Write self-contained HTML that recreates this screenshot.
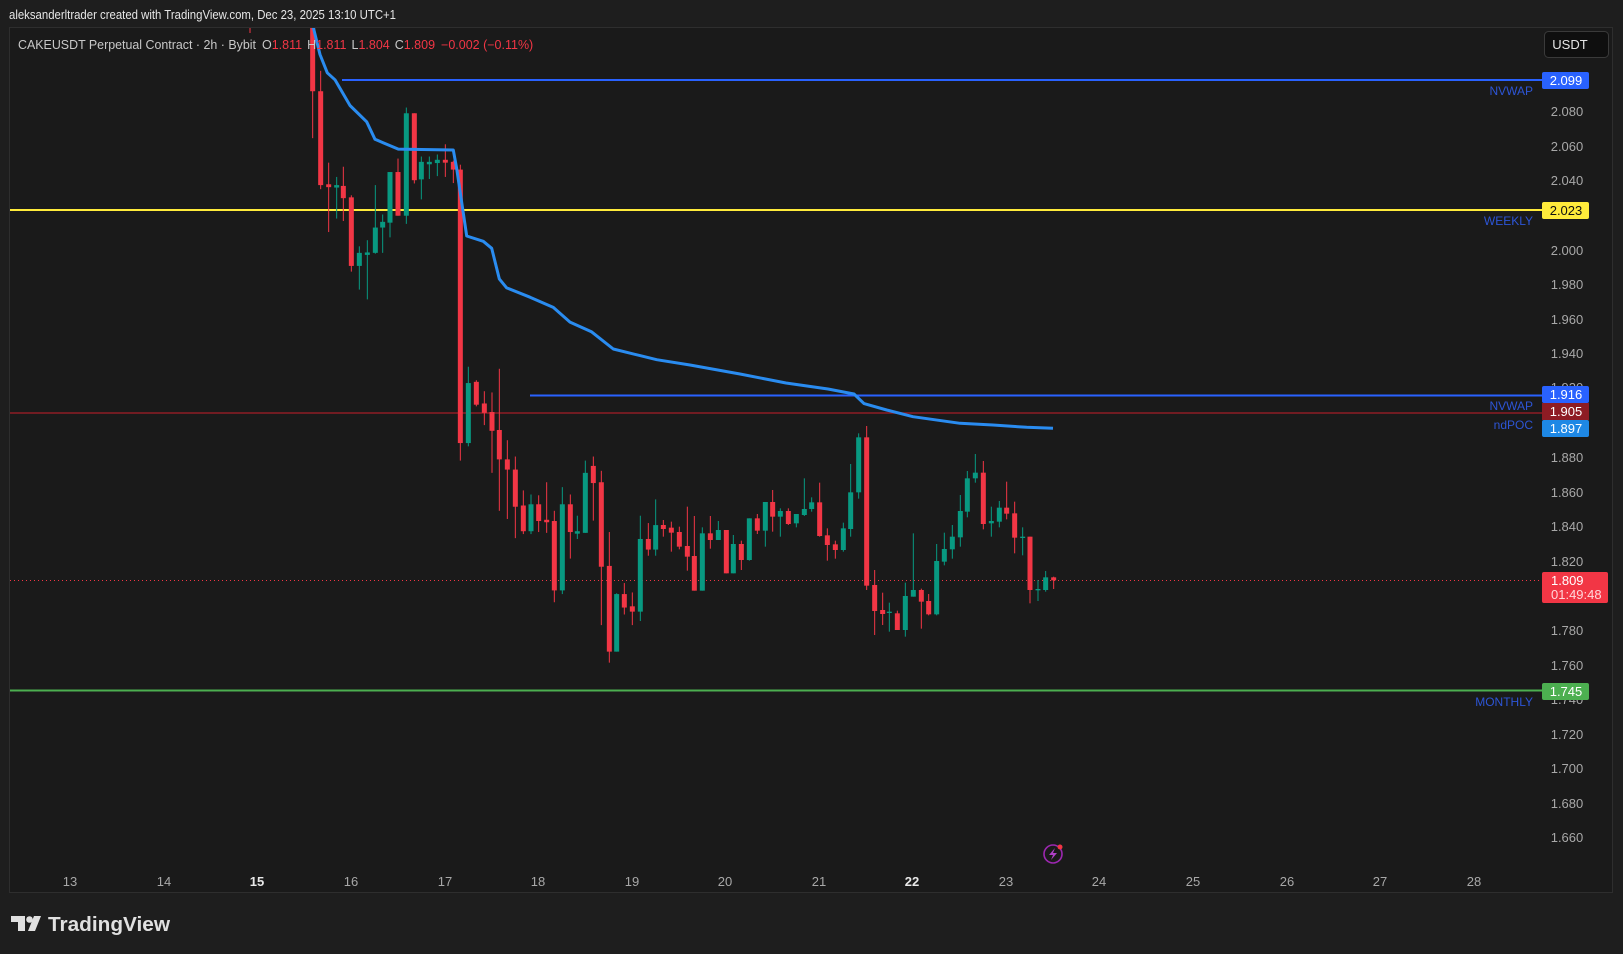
<!DOCTYPE html>
<html><head><meta charset="utf-8"><style>
html,body{margin:0;padding:0;background:#1e1e1e;width:1623px;height:954px;overflow:hidden}
svg{display:block}
text{font-family:"Liberation Sans",sans-serif}
</style></head><body>
<svg width="1623" height="954" viewBox="0 0 1623 954" xmlns="http://www.w3.org/2000/svg">
<defs><clipPath id="c"><rect x="10" y="28" width="1602" height="864"/></clipPath></defs>
<rect width="1623" height="954" fill="#1e1e1e"/>
<text x="9" y="19" font-size="13" fill="#e6e6e6" textLength="387" lengthAdjust="spacingAndGlyphs">aleksanderltrader created with TradingView.com, Dec 23, 2025 13:10 UTC+1</text>
<rect x="9.5" y="27.5" width="1603" height="865" fill="#1a1a1a" stroke="#2e2e2e"/>
<g clip-path="url(#c)">
<!-- horizontal lines -->
<line x1="342" y1="80" x2="1542" y2="80" stroke="#2962ff" stroke-width="2"/>
<line x1="10" y1="210" x2="1542" y2="210" stroke="#ffeb3b" stroke-width="2"/>
<line x1="530" y1="395.5" x2="1542" y2="395.5" stroke="#2962ff" stroke-width="2"/>
<line x1="10" y1="413" x2="1542" y2="413" stroke="#8e1c24" stroke-width="1.5"/>
<line x1="10" y1="690.5" x2="1542" y2="690.5" stroke="#4caf50" stroke-width="2"/>
<line x1="10" y1="580.5" x2="1542" y2="580.5" stroke="#f23645" stroke-width="1" stroke-dasharray="1 3"/>
<rect x="249.5" y="27" width="1" height="6" fill="#f23645"/>
<!-- candles part 1 -->
<g transform="translate(290,30) scale(0.33333,0.40816)">
<g fill="#f23645">
<rect x="66.5" y="-10" width="3" height="275"/><rect x="60.5" y="-10" width="15" height="160"/>
<rect x="90.5" y="100" width="3" height="290"/><rect x="84.5" y="150" width="15" height="230"/>
<rect x="114.5" y="325" width="3" height="170"/><rect x="108.5" y="378" width="15" height="7"/>
<rect x="158.5" y="335" width="3" height="133"/><rect x="152.5" y="382" width="15" height="30"/>
<rect x="182.5" y="405" width="3" height="187"/><rect x="176.5" y="410" width="15" height="168"/>
<rect x="322.5" y="315" width="3" height="140"/><rect x="316.5" y="348" width="15" height="107"/>
<rect x="371.5" y="204" width="3" height="172"/><rect x="365.5" y="204" width="15" height="164"/>
<rect x="464.5" y="280" width="3" height="80"/><rect x="458.5" y="318" width="15" height="7"/>
<rect x="488.5" y="320" width="3" height="55"/><rect x="482.5" y="323" width="15" height="19"/>
<rect x="509.5" y="330" width="3" height="725"/><rect x="503.5" y="342" width="15" height="670"/>
<rect x="557.5" y="858" width="3" height="64"/><rect x="551.5" y="862" width="15" height="56"/>
<rect x="581.5" y="885" width="3" height="83"/><rect x="575.5" y="915" width="15" height="23"/>
<rect x="604.5" y="888" width="3" height="197"/><rect x="598.5" y="936" width="15" height="46"/>
<rect x="626.5" y="830" width="3" height="348"/><rect x="620.5" y="980" width="15" height="72"/>
<rect x="650.5" y="1005" width="3" height="193"/><rect x="644.5" y="1052" width="15" height="25"/>
<rect x="674.5" y="1045" width="3" height="200"/><rect x="668.5" y="1077" width="15" height="91"/>
<rect x="698.5" y="1128" width="3" height="107"/><rect x="692.5" y="1165" width="15" height="63"/>
<rect x="744.5" y="1140" width="3" height="90"/><rect x="738.5" y="1162" width="15" height="41"/>
<rect x="768.5" y="1108" width="3" height="124"/><rect x="762.5" y="1200" width="15" height="6"/>
<rect x="791.5" y="1178" width="3" height="224"/><rect x="785.5" y="1203" width="15" height="170"/>
<rect x="839.5" y="1138" width="3" height="157"/><rect x="833.5" y="1162" width="15" height="68"/>
<rect x="908.5" y="1045" width="3" height="157"/><rect x="902.5" y="1068" width="15" height="42"/>
<rect x="932.5" y="1080" width="3" height="378"/><rect x="926.5" y="1108" width="15" height="207"/>
<rect x="956.5" y="1230" width="3" height="320"/><rect x="950.5" y="1313" width="15" height="210"/>
<rect x="1001.5" y="1355" width="3" height="77"/><rect x="995.5" y="1382" width="15" height="33"/>
<rect x="1025.5" y="1378" width="3" height="80"/><rect x="1019.5" y="1412" width="15" height="13"/>
<rect x="1073.5" y="1208" width="3" height="80"/><rect x="1067.5" y="1247" width="15" height="26"/>
</g>
<g fill="#089981">
<rect x="138.5" y="360" width="3" height="102"/><rect x="132.5" y="380" width="15" height="6"/>
<rect x="206.5" y="530" width="3" height="106"/><rect x="200.5" y="546" width="15" height="32"/>
<rect x="230.5" y="515" width="3" height="145"/><rect x="224.5" y="545" width="15" height="6"/>
<rect x="254.5" y="380" width="3" height="168"/><rect x="248.5" y="484" width="15" height="62"/>
<rect x="276.5" y="452" width="3" height="94"/><rect x="270.5" y="470" width="15" height="14"/>
<rect x="298.5" y="348" width="3" height="160"/><rect x="292.5" y="348" width="15" height="124"/>
<rect x="347.5" y="190" width="3" height="285"/><rect x="341.5" y="204" width="15" height="251"/>
<rect x="392.5" y="310" width="3" height="105"/><rect x="386.5" y="323" width="15" height="43"/>
<rect x="416.5" y="310" width="3" height="55"/><rect x="410.5" y="323" width="15" height="6"/>
<rect x="440.5" y="305" width="3" height="53"/><rect x="434.5" y="318" width="15" height="8"/>
<rect x="533.5" y="825" width="3" height="195"/><rect x="527.5" y="865" width="15" height="147"/>
<rect x="721.5" y="1138" width="3" height="97"/><rect x="715.5" y="1162" width="15" height="66"/>
<rect x="815.5" y="1120" width="3" height="262"/><rect x="809.5" y="1162" width="15" height="211"/>
<rect x="860.5" y="1190" width="3" height="57"/><rect x="854.5" y="1228" width="15" height="6"/>
<rect x="884.5" y="1055" width="3" height="177"/><rect x="878.5" y="1085" width="15" height="147"/>
<rect x="978.5" y="1380" width="3" height="143"/><rect x="972.5" y="1382" width="15" height="141"/>
<rect x="1049.5" y="1190" width="3" height="258"/><rect x="1043.5" y="1247" width="15" height="178"/>
<rect x="1095.5" y="1150" width="3" height="138"/><rect x="1089.5" y="1213" width="15" height="60"/>
</g>
</g>
<!-- candles part 2 -->
<g transform="translate(660,410) scale(0.33333)">
<g fill="#f23645">
<rect x="8.5" y="330" width="3" height="50"/><rect x="2.5" y="345" width="15" height="12"/>
<rect x="32.5" y="335" width="3" height="90"/><rect x="26.5" y="353" width="15" height="15"/>
<rect x="56.5" y="350" width="3" height="68"/><rect x="50.5" y="366" width="15" height="44"/>
<rect x="80.5" y="290" width="3" height="192"/><rect x="74.5" y="408" width="15" height="32"/>
<rect x="101.5" y="318" width="3" height="224"/><rect x="95.5" y="438" width="15" height="104"/>
<rect x="149.5" y="318" width="3" height="98"/><rect x="143.5" y="370" width="15" height="20"/>
<rect x="197.5" y="360" width="3" height="130"/><rect x="191.5" y="360" width="15" height="130"/>
<rect x="242.5" y="392" width="3" height="88"/><rect x="236.5" y="402" width="15" height="48"/>
<rect x="290.5" y="312" width="3" height="60"/><rect x="284.5" y="325" width="15" height="37"/>
<rect x="336.5" y="240" width="3" height="125"/><rect x="330.5" y="276" width="15" height="44"/>
<rect x="383.5" y="295" width="3" height="50"/><rect x="377.5" y="303" width="15" height="39"/>
<rect x="477.5" y="218" width="3" height="162"/><rect x="471.5" y="277" width="15" height="101"/>
<rect x="500.5" y="355" width="3" height="97"/><rect x="494.5" y="376" width="15" height="29"/>
<rect x="524.5" y="392" width="3" height="54"/><rect x="518.5" y="403" width="15" height="17"/>
<rect x="618.5" y="48" width="3" height="492"/><rect x="612.5" y="82" width="15" height="445"/>
<rect x="642.5" y="480" width="3" height="195"/><rect x="636.5" y="525" width="15" height="78"/>
<rect x="666.5" y="548" width="3" height="97"/><rect x="660.5" y="600" width="15" height="12"/>
<rect x="710.5" y="602" width="3" height="58"/><rect x="704.5" y="610" width="15" height="50"/>
<rect x="782.5" y="536" width="3" height="120"/><rect x="776.5" y="540" width="15" height="35"/>
<rect x="804.5" y="552" width="3" height="64"/><rect x="798.5" y="573" width="15" height="40"/>
<rect x="968.5" y="153" width="3" height="205"/><rect x="962.5" y="188" width="15" height="154"/>
<rect x="1038.5" y="215" width="3" height="113"/><rect x="1032.5" y="293" width="15" height="18"/>
<rect x="1062.5" y="275" width="3" height="155"/><rect x="1056.5" y="310" width="15" height="73"/>
<rect x="1108.5" y="380" width="3" height="200"/><rect x="1102.5" y="380" width="15" height="160"/>
<rect x="1179.5" y="500" width="3" height="37"/><rect x="1173.5" y="502" width="15" height="9"/>
</g>
<g fill="#089981">
<rect x="125.5" y="352" width="3" height="190"/><rect x="119.5" y="370" width="15" height="172"/>
<rect x="173.5" y="333" width="3" height="57"/><rect x="167.5" y="360" width="15" height="30"/>
<rect x="218.5" y="375" width="3" height="115"/><rect x="212.5" y="402" width="15" height="88"/>
<rect x="266.5" y="325" width="3" height="127"/><rect x="260.5" y="325" width="15" height="125"/>
<rect x="314.5" y="276" width="3" height="134"/><rect x="308.5" y="276" width="15" height="86"/>
<rect x="359.5" y="295" width="3" height="85"/><rect x="353.5" y="303" width="15" height="17"/>
<rect x="407.5" y="312" width="3" height="40"/><rect x="401.5" y="312" width="15" height="28"/>
<rect x="431.5" y="205" width="3" height="113"/><rect x="425.5" y="297" width="15" height="18"/>
<rect x="453.5" y="262" width="3" height="43"/><rect x="447.5" y="277" width="15" height="20"/>
<rect x="548.5" y="338" width="3" height="87"/><rect x="542.5" y="355" width="15" height="65"/>
<rect x="570.5" y="162" width="3" height="218"/><rect x="564.5" y="247" width="15" height="110"/>
<rect x="594.5" y="70" width="3" height="196"/><rect x="588.5" y="82" width="15" height="165"/>
<rect x="686.5" y="578" width="3" height="87"/><rect x="680.5" y="605" width="15" height="4"/>
<rect x="734.5" y="518" width="3" height="162"/><rect x="728.5" y="558" width="15" height="102"/>
<rect x="758.5" y="370" width="3" height="190"/><rect x="752.5" y="540" width="15" height="20"/>
<rect x="828.5" y="402" width="3" height="214"/><rect x="822.5" y="453" width="15" height="160"/>
<rect x="851.5" y="368" width="3" height="98"/><rect x="845.5" y="417" width="15" height="38"/>
<rect x="875.5" y="345" width="3" height="101"/><rect x="869.5" y="380" width="15" height="38"/>
<rect x="899.5" y="255" width="3" height="155"/><rect x="893.5" y="303" width="15" height="79"/>
<rect x="920.5" y="183" width="3" height="139"/><rect x="914.5" y="205" width="15" height="100"/>
<rect x="944.5" y="132" width="3" height="86"/><rect x="938.5" y="188" width="15" height="17"/>
<rect x="992.5" y="290" width="3" height="90"/><rect x="986.5" y="333" width="15" height="7"/>
<rect x="1016.5" y="273" width="3" height="79"/><rect x="1010.5" y="293" width="15" height="42"/>
<rect x="1086.5" y="352" width="3" height="84"/><rect x="1080.5" y="380" width="15" height="4"/>
<rect x="1132.5" y="510" width="3" height="63"/><rect x="1126.5" y="537" width="15" height="4"/>
<rect x="1155.5" y="483" width="3" height="62"/><rect x="1149.5" y="502" width="15" height="38"/>
</g>
</g>
<!-- VWAP -->
<path d="M312.7 25 L320 54.5 L327.3 72.8 L335 79.8 L350 105.5 L366.7 121.8 L375 139.3 L398.3 149.1 L453.3 150 L456.7 168.7 L466.7 236 L483.3 241.3 L491.7 248.3 L499.3 278.9 L506.7 287.9 L530 297.2 L553.3 307.4 L570 322.1 L591.7 331.9 L613.3 349 L640 355.6 L656.7 359.7 L690 365 L740 374 L786 383 L828 389 L854 394 L864 403.6 L886.7 410 L913 416.7 L960 423.3 L993 425 L1026.7 427.3 L1053 428.3" fill="none" stroke="#2a8cf0" stroke-width="3" stroke-linejoin="round"/>
</g>
<!-- legend -->
<text x="18" y="49" font-size="12.5" fill="#c8c8c8"><tspan textLength="238" lengthAdjust="spacingAndGlyphs">CAKEUSDT Perpetual Contract · 2h · Bybit</tspan></text>
<text x="262" y="49" font-size="12.5" fill="#c8c8c8">O<tspan fill="#f23645">1.811</tspan><tspan dx="5">H</tspan><tspan fill="#f23645">1.811</tspan><tspan dx="5">L</tspan><tspan fill="#f23645">1.804</tspan><tspan dx="5">C</tspan><tspan fill="#f23645">1.809</tspan><tspan dx="6" fill="#f23645">−0.002 (−0.11%)</tspan></text>
<!-- USDT -->
<rect x="1544.5" y="31.5" width="64" height="26" rx="4" fill="#0f0f0f" stroke="#3a3a3a"/>
<text x="1570" y="49" font-size="13" fill="#e6e6e6" text-anchor="middle">USDT</text>
<!-- price axis -->
<g font-size="13" fill="#a8a8a8" text-anchor="middle">
<text x="1567" y="116">2.080</text><text x="1567" y="151">2.060</text><text x="1567" y="185">2.040</text>
<text x="1567" y="255">2.000</text><text x="1567" y="289">1.980</text><text x="1567" y="324">1.960</text>
<text x="1567" y="358">1.940</text><text x="1567" y="392">1.920</text>
<text x="1567" y="462">1.880</text><text x="1567" y="497">1.860</text><text x="1567" y="531">1.840</text>
<text x="1567" y="566">1.820</text><text x="1567" y="635">1.780</text><text x="1567" y="670">1.760</text>
<text x="1567" y="704">1.740</text><text x="1567" y="739">1.720</text><text x="1567" y="773">1.700</text>
<text x="1567" y="808">1.680</text><text x="1567" y="842">1.660</text>
</g>
<g font-size="13" text-anchor="middle">
<rect x="1542" y="72" width="47" height="17" rx="2" fill="#2962ff"/><text x="1566" y="85" fill="#fff">2.099</text>
<rect x="1542" y="202" width="47" height="17" rx="2" fill="#ffeb3b"/><text x="1566" y="215" fill="#111">2.023</text>
<rect x="1542" y="386" width="47" height="17" rx="2" fill="#2962ff"/><text x="1566" y="399" fill="#fff">1.916</text>
<rect x="1542" y="403" width="47" height="17" fill="#8e1c24"/><text x="1566" y="416" fill="#fff">1.905</text>
<rect x="1542" y="420" width="47" height="17" rx="2" fill="#1e88e5"/><text x="1566" y="433" fill="#fff">1.897</text>
<rect x="1542" y="572" width="66" height="31" rx="2" fill="#f23645"/><text x="1551" y="585" fill="#fff" text-anchor="start">1.809</text><text x="1551" y="599" fill="#ffd6da" text-anchor="start">01:49:48</text>
<rect x="1542" y="683" width="47" height="17" rx="2" fill="#4caf50"/><text x="1566" y="696" fill="#fff">1.745</text>
</g>
<g font-size="12" fill="#2d55d6" text-anchor="end">
<text x="1533" y="95">NVWAP</text><text x="1533" y="225">WEEKLY</text>
<text x="1533" y="410">NVWAP</text><text x="1533" y="429">ndPOC</text>
<text x="1533" y="706">MONTHLY</text>
</g>
<!-- date axis -->
<g font-size="13" fill="#a8a8a8" text-anchor="middle">
<text x="70" y="886">13</text><text x="164" y="886">14</text><text x="257" y="886" fill="#e8e8e8" font-weight="bold">15</text>
<text x="351" y="886">16</text><text x="445" y="886">17</text><text x="538" y="886">18</text>
<text x="632" y="886">19</text><text x="725" y="886">20</text><text x="819" y="886">21</text>
<text x="912" y="886" fill="#e8e8e8" font-weight="bold">22</text><text x="1006" y="886">23</text><text x="1099" y="886">24</text>
<text x="1193" y="886">25</text><text x="1287" y="886">26</text><text x="1380" y="886">27</text><text x="1474" y="886">28</text>
</g>
<!-- lightning icon -->
<circle cx="1053" cy="854" r="9" fill="none" stroke="#9c27b0" stroke-width="1.6"/>
<path d="M1055 848 L1049 855 L1053 855 L1051 860 L1057 853 L1053 853 Z" fill="#b040c8"/>
<circle cx="1060" cy="847" r="2.5" fill="#f23645"/>
<!-- logo -->
<path d="M11 916 H25 V931 H18 V922 H11 Z" fill="#e0e0e0"/>
<circle cx="29.5" cy="919.5" r="3.3" fill="#e0e0e0"/>
<path d="M34 916 H41 L35 931 H28 Z" fill="#e0e0e0"/>
<text x="48" y="931" font-size="20" font-weight="bold" fill="#e0e0e0" textLength="122" lengthAdjust="spacingAndGlyphs">TradingView</text>
</svg>
</body></html>
